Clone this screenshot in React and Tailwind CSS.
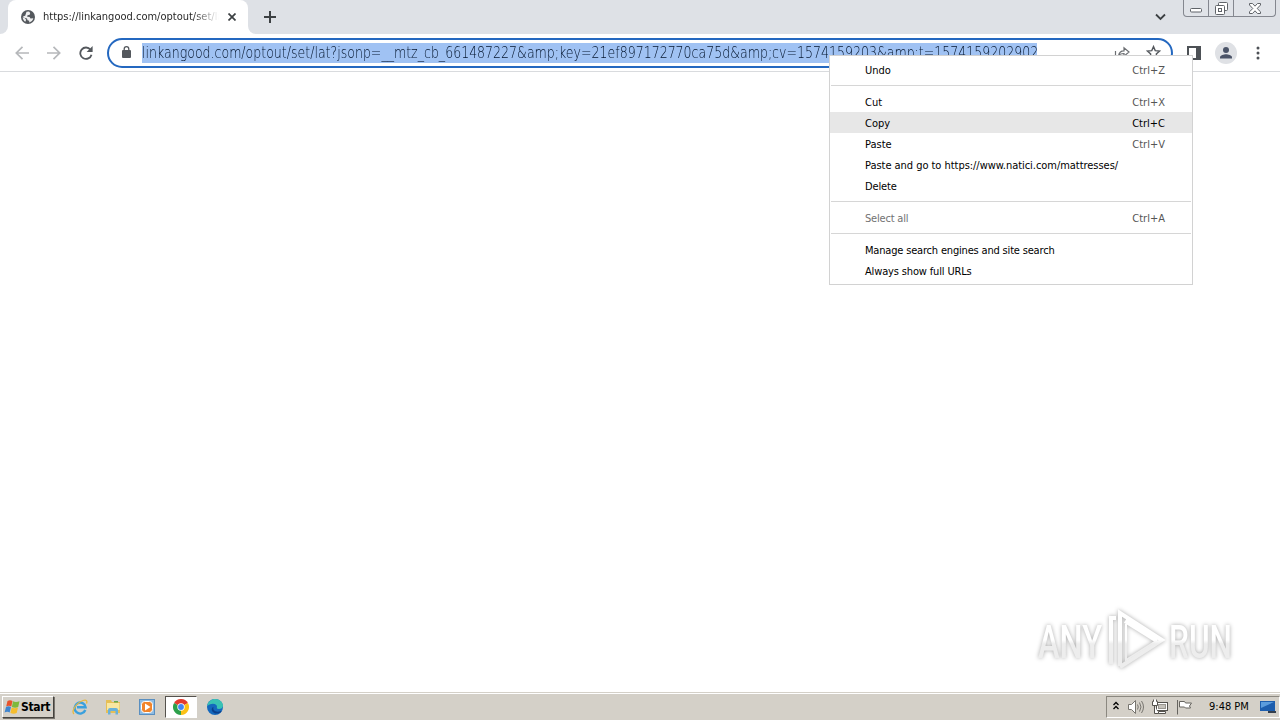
import clsx from "clsx";

const MENU = [
  [{ label: "Undo", keys: "Ctrl+Z" }],
  [
    { label: "Cut", keys: "Ctrl+X" },
    { label: "Copy", keys: "Ctrl+C", active: true },
    { label: "Paste", keys: "Ctrl+V" },
    { label: "Paste and go to https://www.natici.com/mattresses/", spacing: "tracking-[-0.04px]" },
    { label: "Delete", spacing: "tracking-[-0.15px]" },
  ],
  [{ label: "Select all", keys: "Ctrl+A", disabled: true, spacing: "tracking-[-0.2px]" }],
  [
    { label: "Manage search engines and site search", spacing: "tracking-[-0.18px]" },
    { label: "Always show full URLs", spacing: "tracking-[-0.15px]" },
  ],
];

function GlobeIcon() {
  return (
    <svg className="size-[14px]" viewBox="0 0 14 14">
      <circle cx="7" cy="7" r="7" fill="#54585d" />
      <path d="M5.500 1.800 8 1.600 9.200 3 8.700 4.700 6.500 5.200 6.200 6.700 8.600 6.900 9.500 8.500 12.300 8.300C11.900 10.500 10.300 12 8.200 12.400L8.200 10.800 6.500 10.300 6 8.600 1.700 7.200C1.700 8.800 2.800 10.800 4.300 11.700L5.200 9.700 2 6.200 4.200 5.800z" fill="#fff" opacity=".9" />
    </svg>
  );
}

function TabStrip() {
  return (
    <header className="flex h-[34px] bg-[#dee1e6]">
      <div className="flex w-2 items-end bg-white">
        <div className="h-full w-2 rounded-br-lg bg-[#dee1e6]" />
      </div>
      <div className="bg-[#dee1e6]">
        <div className="flex h-[34px] w-[240px] items-center rounded-t-lg bg-white pl-[13px]">
          <GlobeIcon />
          <div className="ml-2 w-[176px] overflow-hidden whitespace-nowrap bg-gradient-to-r from-[#222] from-85% to-transparent to-100% bg-clip-text pt-px text-[11px] text-transparent">
            https://linkangood.com/optout/set/lat
          </div>
          <svg className="ml-[9px] size-2" viewBox="0 0 8 8" stroke="#3c4043" strokeWidth="1.700">
            <path d="M.5.5l7 7M7.500.5l-7 7" />
          </svg>
        </div>
      </div>
      <div className="w-2 bg-white">
        <div className="h-full w-2 rounded-bl-lg bg-[#dee1e6]" />
      </div>
      <svg className="ml-2 mt-[11px] size-3" viewBox="0 0 12 12" stroke="#3c4043" strokeWidth="2">
        <path d="M6 0v12M0 6h12" />
      </svg>
      <svg className="ml-auto mt-[13px] mr-[17px] h-2 w-[11px]" viewBox="0 0 11 8" fill="none" stroke="#3c4043" strokeWidth="1.800">
        <path d="M1 1.500 5.500 6 10 1.500" />
      </svg>
      <div className="mr-1 flex h-[17px] w-[93px] rounded-b-[4px] border border-t-0 border-[#84878f] bg-[#e0e3e8]">
        <div className="flex w-[25px] justify-center border-r border-[#84878f] pt-2">
          <svg className="h-[5px] w-3" viewBox="0 0 12 5">
            <rect x=".5" y=".5" width="11" height="3.500" rx="1" fill="#fff" stroke="#5f6368" />
          </svg>
        </div>
        <div className="flex w-[25px] justify-center border-r border-[#84878f] pt-[2px]">
          <svg className="size-[13px]" viewBox="0 0 13 13" fill="#fff" stroke="#5f6368">
            <rect x="3.500" y=".5" width="9" height="8" rx="1" />
            <rect x=".5" y="3.500" width="9" height="9" rx="1" />
            <rect x="3.500" y="6.500" width="3" height="3" />
          </svg>
        </div>
        <div className="flex flex-1 justify-center pt-[3px]">
          <svg className="h-[11px] w-3" viewBox="0 0 12 11" fill="#fff" stroke="#5f6368">
            <path d="M.5.5h3L6 3.200 8.500.5h3v1.500L8.200 5.500l3.300 3.300v1.700h-3L6 7.800l-2.500 2.700h-3V8.800l3.300-3.300L.5 2z" />
          </svg>
        </div>
      </div>
    </header>
  );
}

function Toolbar() {
  return (
    <div className="flex h-[38px] items-center border-b border-[#d9dbde] bg-white">
      <svg className="ml-[15px] h-[14px] w-[14px]" viewBox="0 0 14 14" fill="none" stroke="#b6b8bb" strokeWidth="1.700">
        <path d="M14 7H1.500M7.500.8 1.300 7l6.200 6.200" />
      </svg>
      <svg className="ml-[18px] h-[14px] w-[14px]" viewBox="0 0 14 14" fill="none" stroke="#b6b8bb" strokeWidth="1.700">
        <path d="M0 7h12.500M6.500.8 12.700 7l-6.200 6.200" />
      </svg>
      <svg className="ml-[18px] h-[14px] w-[14px]" viewBox="0 0 14 14">
        <path d="M11.500 3.700A5.700 5.700 0 1 0 12.500 8.700" fill="none" stroke="#54585d" strokeWidth="1.800" />
        <path d="M13.600 0v6H7.600z" fill="#54585d" />
      </svg>
      <div className="ml-[14px] flex h-[30px] w-[1066px] items-center rounded-full border-2 border-[#2468c0] pl-[13px]">
        <svg className="mb-px h-3 w-[9px]" viewBox="0 0 9 12">
          <rect y="4" width="9" height="8" rx="1" fill="#54585d" />
          <path d="M2.200 4.500V3a2.300 2.300 0 0 1 4.600 0v1.500" fill="none" stroke="#54585d" strokeWidth="1.300" />
        </svg>
        <div className="ml-[11px] h-5 w-[895px] bg-[#a0c2f3]">
          <div className="w-max origin-left scale-x-[0.8375] whitespace-nowrap font-['DejaVu_Sans_Light','DejaVu_Sans',sans-serif] text-[15px] font-extralight leading-[21px] text-[#03142c]">
            linkangood.com/optout/set/lat?jsonp=__mtz_cb_661487227&amp;amp;key=21ef897172770ca75d&amp;amp;cv=1574159203&amp;amp;t=1574159202902
          </div>
        </div>
        <svg className="ml-[77px] h-[14px] w-4" viewBox="0 0 16 14" fill="none" stroke="#6b6e72" strokeWidth="1.200">
          <path d="M1.500 5v8h11v-2M4.500 10c.5-4 3-5.200 5.500-5.200V1.700l5 4.300-5 4.300V7.500C7.500 7.500 5.500 8 4.500 10z" />
        </svg>
        <svg className="ml-[16px] size-[15px]" viewBox="0 0 14 14" fill="none" stroke="#54585d" strokeWidth="1.300">
          <path d="m7 1.500 1.600 3.700 4.100.4-3.100 2.700.9 4.100L7 10.200l-3.500 2.200.9-4.100L1.300 5.600l4.100-.4z" />
        </svg>
      </div>
      <svg className="ml-[14px] h-[14px] w-[14px]" viewBox="0 0 14 14">
        <rect x="1" y="1" width="12" height="12" fill="none" stroke="#4d5156" strokeWidth="2" />
        <path d="M9 0h5v14H9z" fill="#4d5156" />
      </svg>
      <svg className="ml-[14px] size-[22px]" viewBox="0 0 22 22" fill="#4b5468">
        <circle cx="11" cy="11" r="11" fill="#dfe1e5" />
        <circle cx="11" cy="8" r="3" />
        <path d="M5 16.500v-1.300c0-2 4-3 6-3s6 1 6 3v1.300z" />
      </svg>
      <svg className="ml-[19px] h-[14px] w-1" viewBox="0 0 4 14" fill="#4d5156">
        <circle cx="2" cy="2" r="1.500" />
        <circle cx="2" cy="7" r="1.500" />
        <circle cx="2" cy="12" r="1.500" />
      </svg>
    </div>
  );
}

function ContextMenu() {
  return (
    <div className="absolute left-[829px] top-[55px] w-[364px] border border-[#d2d2d2] bg-white py-[3px] text-[11px] text-black">
      {MENU.map((group, i) => (
        <div key={i}>
          {i > 0 && <div className="mx-px my-[5px] h-px bg-[#d6d6d6]" />}
          {group.map((item) => (
            <div
              key={item.label}
              className={clsx(
                "flex h-[21px] items-center justify-between pt-[3px] pr-[27px] pl-[35px] whitespace-nowrap",
                item.active && "bg-[#e7e7e7]",
                item.disabled && "text-[#727272]"
              )}
            >
              <span className={item.spacing}>{item.label}</span>
              <span className={clsx(!item.active && "text-[#555]")}>{item.keys}</span>
            </div>
          ))}
        </div>
      ))}
    </div>
  );
}

function Watermark() {
  return (
    <div className="absolute left-[1034px] top-[604px] drop-shadow-[0_0_2px_#aaa]">
      <svg className="h-[72px] w-[208px]" viewBox="-4 -4 208 72" fill="url(#mark)">
        <defs>
          <linearGradient id="mark" gradientUnits="userSpaceOnUse" x1="0" y1="0" x2="0" y2="64">
            <stop offset=".5" stopColor="#fff" />
            <stop offset=".56" stopColor="#ededed" />
          </linearGradient>
        </defs>
        <g fontSize="46" fontFamily="Roboto, sans-serif" fontWeight="500">
          <text x="0" y="50" textLength="64" lengthAdjust="spacingAndGlyphs">ANY</text>
          <text x="131" y="50" textLength="63" lengthAdjust="spacingAndGlyphs">RUN</text>
        </g>
        <g fill="none" stroke="url(#mark)" strokeWidth="4">
          <path d="M78 10h-5v46M82 58V5l42 27-42 27M87 13l32 20" />
          <path d="M88 16v36l30-19" strokeWidth="2" />
        </g>
      </svg>
    </div>
  );
}

function WindowsFlag() {
  return (
    <svg className="h-4 w-[17px] shrink-0" viewBox="0 0 17 16">
      <path d="M3.500 2Q6 .5 8.500 2L7.300 7.500Q4.800 6.200 2.200 7.500z" fill="#e8532b" />
      <path d="M9 2.300q2.700 1.500 6.500 0L14.200 8q-3 1.500-6.300 0z" fill="#7eb93c" />
      <path d="M2 8q2.500-1.300 5 0L5.700 13.500Q3.200 12 .6 13.500z" fill="#3f85cf" />
      <path d="M7.700 8.500q3 1.500 6.300 0l-1.300 5.500q-3 1.500-6.300 0z" fill="#f5bd2d" />
    </svg>
  );
}

function Taskbar() {
  return (
    <footer className="flex h-[28px] items-center border-t border-[#d4d0c8] bg-[#d4d0c8] pt-px shadow-[inset_0_1px_0_#fff]">
      <div className="ml-0.5 flex h-[22px] w-[52px] items-center border border-t-white border-r-[#45423d] border-b-[#45423d] border-l-white pl-px shadow-[1px_1px_0_#77746e]">
        <WindowsFlag />
        <span className="text-[12px] font-bold tracking-[-0.3px] text-black">Start</span>
      </div>
      <svg className="ml-[18px] size-4" viewBox="0 0 16 16" fill="none">
        <path d="M13.300 11A5.500 5.500 0 1 1 13.600 8.300H5" stroke="#3aa0dd" strokeWidth="2.400" />
        <path d="M2 15C-1 12.500 4 4 11 1.500c3.500-1.200 4.500.5 3.500 3" stroke="#e7b83e" strokeWidth="1.300" />
      </svg>
      <svg className="ml-[17px] size-4" viewBox="0 0 16 16">
        <path d="M1 1h5l1 2h8v11H1z" fill="#e6bf56" />
        <path d="M2 4h12.500v7H2z" fill="#f9e7a1" />
        <path d="M3 15.500V11q0-2 2-2h6q2 0 2 2v4.500h-2.500V12h-5v3.500z" fill="#69b1da" />
        <path d="M9 2h4v1.500H9z" fill="#64a94e" />
      </svg>
      <svg className="ml-[18px] size-4" viewBox="0 0 16 16">
        <rect x=".5" y=".5" width="15" height="15" fill="#8dbbe2" stroke="#5a8fc0" />
        <rect x="2.500" y="2.500" width="11" height="11" rx="3" fill="#f1842a" stroke="#fff" />
        <path d="m6 4.500 5.500 3.500L6 11.500z" fill="#fff" />
      </svg>
      <div className="ml-[10px] flex h-[22px] w-8 items-center justify-center border border-t-[#55524d] border-r-white border-b-white border-l-[#55524d] bg-white">
        <svg className="size-4" viewBox="0 0 16 16">
          <path d="M8 8 1.070 4A8 8 0 0 1 14.930 4z" fill="#e33b2e" />
          <path d="M8 8 14.930 4A8 8 0 0 1 8 16z" fill="#fbc116" />
          <path d="M8 8v8A8 8 0 0 1 1.070 4z" fill="#2da04b" />
          <circle cx="8" cy="8" r="3.700" fill="#fff" />
          <circle cx="8" cy="8" r="2.900" fill="#4285f4" />
        </svg>
      </div>
      <svg className="ml-[10px] size-4" viewBox="0 0 16 16">
        <circle cx="8" cy="8" r="8" fill="#1468bd" />
        <path d="M.2 7C1 2 5 0 8 0c5 0 8 3.500 8 6.500 0 2.500-2 3.500-4 3.500s-2.500-1-2-2c.5-3-5-5-9.800-1z" fill="#39c2b4" />
        <path d="M6.500 8c-1 3 2 6 7.500 4 .7-.2.700.3.3.7-2 2-5 2.300-7 1.300C4 12.500 4 8.500 6.500 8z" fill="#0b408c" />
      </svg>

      <div className="ml-auto flex h-[22px] w-[174px] items-center border border-t-[#8b8880] border-r-white border-b-white border-l-[#8b8880]">
        <svg className="ml-[6px] mb-1 h-[9px] w-[6px]" viewBox="0 0 6 9" fill="none" stroke="#000" strokeWidth="1.300">
          <path d="m.5 4 2.500-2.500L5.500 4M.5 8 3 5.500 5.500 8" />
        </svg>
        <svg className="ml-[9px] size-4" viewBox="0 0 16 16" fill="#fff" stroke="#77756f">
          <path d="M.5 5.500h3l4-4v13l-4-4h-3z" />
          <path d="M9.500 5.500q1.500 2.500 0 5M11.500 3.500q3 4.500 0 9M13.500 2q4 6 0 12" fill="none" />
        </svg>
        <svg className="ml-2 size-4" viewBox="0 0 16 16" fill="#fff" stroke="#55534e">
          <rect x="4.500" y="3.500" width="11" height="8" />
          <rect x="6.500" y="5.500" width="7" height="4" fill="#c5c2bb" stroke="#99968f" />
          <path d="M1.500.5v2h-1v4h5v-4h-1v-2M2.500 6.500v8h4M6.500 12.500h7v2h-7z" />
        </svg>
        <svg className="ml-2 size-4" viewBox="0 0 16 16" fill="#fff" stroke="#66645f">
          <path d="M1.500 1v14.500M3.500 2.500h5l1 1.500h6l-2 3 1 2h-5l-1-1h-5z" />
        </svg>
        <span className="ml-[17px] w-[41px] whitespace-nowrap pt-px text-[11px] text-black">9:48 PM</span>
        <svg className="ml-[10px] h-[14px] w-4" viewBox="0 0 16 14">
          <path d="M0 1h15v10H0z" fill="#1d5eae" />
          <path d="M1 2h13L1 8z" fill="#5b9cdd" />
          <path d="M8 11h8v2H8z" fill="#343e4c" />
        </svg>
      </div>
    </footer>
  );
}

export default function App() {
  return (
    <div className="relative flex h-[720px] w-[1280px] flex-col overflow-hidden bg-white font-['DejaVu_Sans_Condensed','DejaVu_Sans',sans-serif]">
      <TabStrip />
      <Toolbar />
      <main className="flex-1" />
      <Taskbar />
      <Watermark />
      <ContextMenu />
    </div>
  );
}
